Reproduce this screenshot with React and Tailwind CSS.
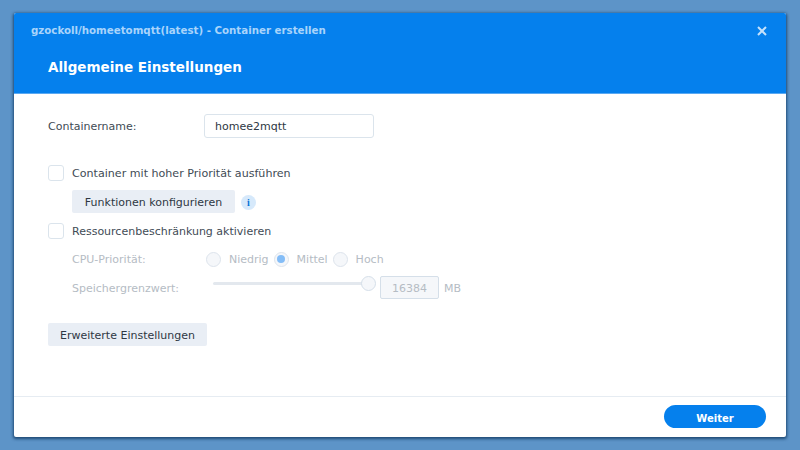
import React from "react";

const Checkbox = () => (
  <span className="w-4 h-4 shrink-0 bg-white border border-[#dbe4ec] rounded-[3px]" />
);

const Radio = ({ checked }) => (
  <span className="w-[15px] h-[15px] shrink-0 rounded-full bg-[#f5f7fa] border border-[#dde4ec] flex items-center justify-center">
    {checked && <span className="w-2 h-2 rounded-full bg-[#84bdf7]" />}
  </span>
);

export default function App() {
  return (
    <div className="w-[800px] h-[450px] overflow-hidden bg-[#5d94c8] pt-[13px] pl-[14px] font-['DejaVu_Sans',sans-serif] text-[11px]">
      <div className="w-[772px] h-[424px] bg-white rounded-[2px] flex flex-col shadow-[0_1px_3px_1px_rgba(10,50,90,0.75)]">
        <div className="h-[81px] shrink-0 bg-[#0580ed] border-b border-[#5aa9f2] rounded-t-[2px] flex flex-col">
          <div className="h-[35px] flex items-center justify-between pl-[17px] pr-[19px] pt-[1px]">
            <span className="font-bold text-[#a9d4fb] text-[10.25px]">gzockoll/homeetomqtt(latest) - Container erstellen</span>
            <svg width="10" height="10" viewBox="0 0 10 10" fill="none" stroke="#c5e1fb" strokeWidth="2">
              <path d="M1 1 L9 9 M9 1 L1 9" />
            </svg>
          </div>
          <div className="pl-[34px] pt-[1px] font-bold text-white text-[13.5px] leading-[36px]">Allgemeine Einstellungen</div>
        </div>

        <div className="flex-1 flex flex-col pl-[34px] pt-[20px] text-[#414b55]">
          <div className="flex items-center h-[24px]">
            <span className="w-[156px] pt-[3px]">Containername:</span>
            <div className="w-[170px] h-[24px] border border-[#dbe4ec] rounded-[3px] pl-[10px] pt-[3px] flex items-center text-[#2e3843]">homee2mqtt</div>
          </div>

          <div className="flex items-center gap-2 mt-[27px] h-4">
            <Checkbox />
            <span className="pt-[2px] text-[11.1px]">Container mit hoher Priorität ausführen</span>
          </div>

          <div className="flex items-center ml-6 mt-[9px] h-[23px]">
            <div className="w-[163px] h-[23px] pt-[3px] bg-[#e9eef5] rounded-[2px] flex items-center justify-center text-[#2e3843]">Funktionen konfigurieren</div>
            <span className="ml-[6px] mt-[1px] w-[15px] h-[15px] rounded-full bg-[#d6e9fb] flex items-center justify-center text-[10px] font-bold text-[#0573d6] font-['Liberation_Serif',serif]">i</span>
          </div>

          <div className="flex items-center gap-2 mt-[10px] h-4">
            <Checkbox />
            <span className="pt-[2px]">Ressourcenbeschränkung aktivieren</span>
          </div>

          <div className="flex items-center ml-6 mt-[12px] h-4 text-[#b5bcc4]">
            <span className="w-[134px] pt-[3px]">CPU-Priorität:</span>
            <Radio />
            <span className="ml-[8px] pt-[3px]">Niedrig</span>
            <span className="ml-[5px]"><Radio checked /></span>
            <span className="ml-[8px] pt-[3px]">Mittel</span>
            <span className="ml-[5px]"><Radio /></span>
            <span className="ml-[8px] pt-[3px]">Hoch</span>
          </div>

          <div className="flex items-start ml-6 mt-[9px] h-[24px] text-[#b5bcc4]">
            <span className="w-[141px] pt-[5px]">Speichergrenzwert:</span>
            <div className="relative w-[155px] h-[3px] mt-[6px] bg-[#e3e8ee] rounded-full">
              <span className="absolute right-[-8px] top-[-6px] w-[15px] h-[15px] rounded-full bg-[#f5f7fa] border border-[#d5dfe9]" />
            </div>
            <div className="ml-[12px] w-[59px] h-[23px] pt-[3px] bg-[#f5f7fa] border border-[#d5dfe9] rounded-[2px] flex items-center justify-center">16384</div>
            <span className="ml-[5px] pt-[5px]">MB</span>
          </div>

          <div className="w-[159px] h-[23px] pt-[4px] mt-[23px] bg-[#e9eef5] rounded-[2px] flex items-center justify-center text-[#2e3843]">Erweiterte Einstellungen</div>
        </div>

        <div className="h-[41px] shrink-0 border-t border-[#e6ecf2] flex items-start justify-end pr-5 pt-2">
          <div className="w-[102px] h-[23px] pt-[4px] rounded-full bg-[#0580ed] flex items-center justify-center font-bold text-[10px] text-white">Weiter</div>
        </div>
      </div>
    </div>
  );
}
